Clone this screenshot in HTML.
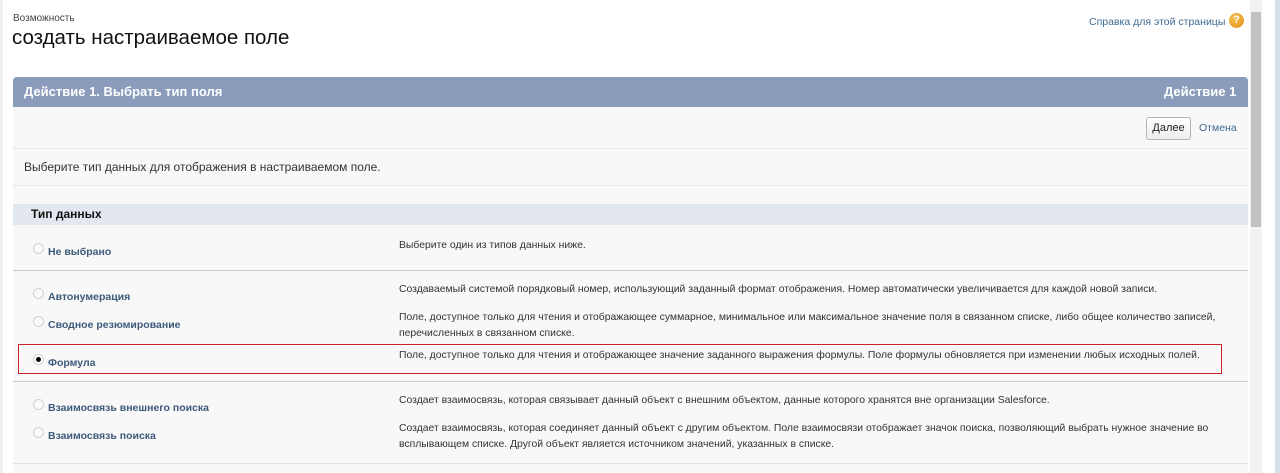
<!DOCTYPE html>
<html><head><meta charset="utf-8"><style>
*{margin:0;padding:0;box-sizing:border-box}
body{width:1280px;height:473px;overflow:hidden;background:#fff;font-family:"Liberation Sans","Noto Sans CJK SC",sans-serif;position:relative;color:#222}
.a{position:absolute;white-space:nowrap}
.lbl{font-size:10.5px;font-weight:bold;color:#3d5a7a}
.d{font-size:10.4px;color:#333;line-height:16px}
.r{position:absolute;width:11px;height:11px;border-radius:50%;border:1px solid #d2d2d2;background:#fafafa}
.hl{position:absolute;left:13px;width:1235px;height:1px}
</style></head><body>
<div class="a" style="left:0;top:0;width:3px;height:473px;background:#f0f0f0"></div>
<div class="a" style="left:13px;top:13px;font-size:10px;color:#444">Возможность</div>
<div class="a" style="left:12px;top:26px;font-size:20.5px;color:#111">создать настраиваемое поле</div>
<div class="a" style="left:1089px;top:16px;font-size:10.5px;color:#3f6b93">Справка для этой страницы</div>
<div class="a" style="left:1229px;top:13px;width:15px;height:15px;border-radius:50%;background:radial-gradient(circle at 40% 35%,#f8c153,#e09014);color:#fff;font-size:11px;font-weight:bold;text-align:center;line-height:15px">?</div>
<div class="a" style="left:1250px;top:0;width:12px;height:473px;background:#f1f1f1"></div>
<div class="a" style="left:1251px;top:12px;width:10px;height:215px;background:#c1c1c1"></div>
<div class="a" style="left:1262px;top:0;width:18px;height:473px;background:#fff"></div>
<div class="a" style="left:1275px;top:0;width:5px;height:473px;background:#d6e0ea"></div>
<div class="a" style="left:13px;top:77px;width:1235px;height:396px;background:#f8f8f8"></div>
<div class="a" style="left:13px;top:77px;width:1235px;height:30px;background:#8a9bbb;border-radius:4px 4px 0 0"></div>
<div class="a" style="left:24px;top:84px;font-size:13px;font-weight:bold;color:#fff">Действие 1. Выбрать тип поля</div>
<div class="a" style="left:1164px;top:84px;font-size:13px;font-weight:bold;color:#fff">Действие 1</div>
<div class="a" style="left:1146px;top:117px;width:45px;height:23px;border:1px solid #b5b5b5;border-radius:3px;background:linear-gradient(#fff,#eee);font-size:11px;text-align:center;line-height:21px;color:#222">Далее</div>
<div class="a" style="left:1199px;top:122px;font-size:10.5px;color:#3f6b93">Отмена</div>
<div class="hl" style="top:148px;background:#e8e8e8"></div>
<div class="a" style="left:24px;top:160px;font-size:12px;color:#333">Выберите тип данных для отображения в настраиваемом поле.</div>
<div class="hl" style="top:185px;background:#e8e8e8"></div>
<div class="a" style="left:13px;top:204px;width:1235px;height:21px;background:#e3e7ef"></div>
<div class="a" style="left:31px;top:207px;font-size:12px;font-weight:bold;color:#111">Тип данных</div>

<div class="r" style="left:33px;top:243px"></div>
<div class="a lbl" style="left:48px;top:246px">Не выбрано</div>
<div class="a d" style="left:399px;top:238px">Выберите один из типов данных ниже.</div>
<div class="hl" style="top:270px;background:#c5c9d0"></div>

<div class="r" style="left:33px;top:288px"></div>
<div class="a lbl" style="left:48px;top:291px">Автонумерация</div>
<div class="a d" style="left:399px;top:282px">Создаваемый системой порядковый номер, использующий заданный формат отображения. Номер автоматически увеличивается для каждой новой записи.</div>
<div class="r" style="left:33px;top:316px"></div>
<div class="a lbl" style="left:48px;top:319px">Сводное резюмирование</div>
<div class="a d" style="left:399px;top:310px">Поле, доступное только для чтения и отображающее суммарное, минимальное или максимальное значение поля в связанном списке, либо общее количество записей,<br>перечисленных в связанном списке.</div>

<div class="a" style="left:18px;top:344px;width:1204px;height:30px;border:1.5px solid #c8232c"></div>
<div class="r" style="left:33px;top:354px;background:#fff"></div>
<div class="a" style="left:36px;top:357px;width:5px;height:5px;border-radius:50%;background:#000"></div>
<div class="a lbl" style="left:48px;top:357px">Формула</div>
<div class="a d" style="left:399px;top:348px">Поле, доступное только для чтения и отображающее значение заданного выражения формулы. Поле формулы обновляется при изменении любых исходных полей.</div>
<div class="hl" style="top:381px;background:#c5c9d0"></div>

<div class="r" style="left:33px;top:399px"></div>
<div class="a lbl" style="left:48px;top:402px">Взаимосвязь внешнего поиска</div>
<div class="a d" style="left:399px;top:393px">Создает взаимосвязь, которая связывает данный объект с внешним объектом, данные которого хранятся вне организации Salesforce.</div>
<div class="r" style="left:33px;top:427px"></div>
<div class="a lbl" style="left:48px;top:430px">Взаимосвязь поиска</div>
<div class="a d" style="left:399px;top:421px">Создает взаимосвязь, которая соединяет данный объект с другим объектом. Поле взаимосвязи отображает значок поиска, позволяющий выбрать нужное значение во<br>всплывающем списке. Другой объект является источником значений, указанных в списке.</div>
<div class="hl" style="top:463px;background:#e3e3e3"></div>
</body></html>
